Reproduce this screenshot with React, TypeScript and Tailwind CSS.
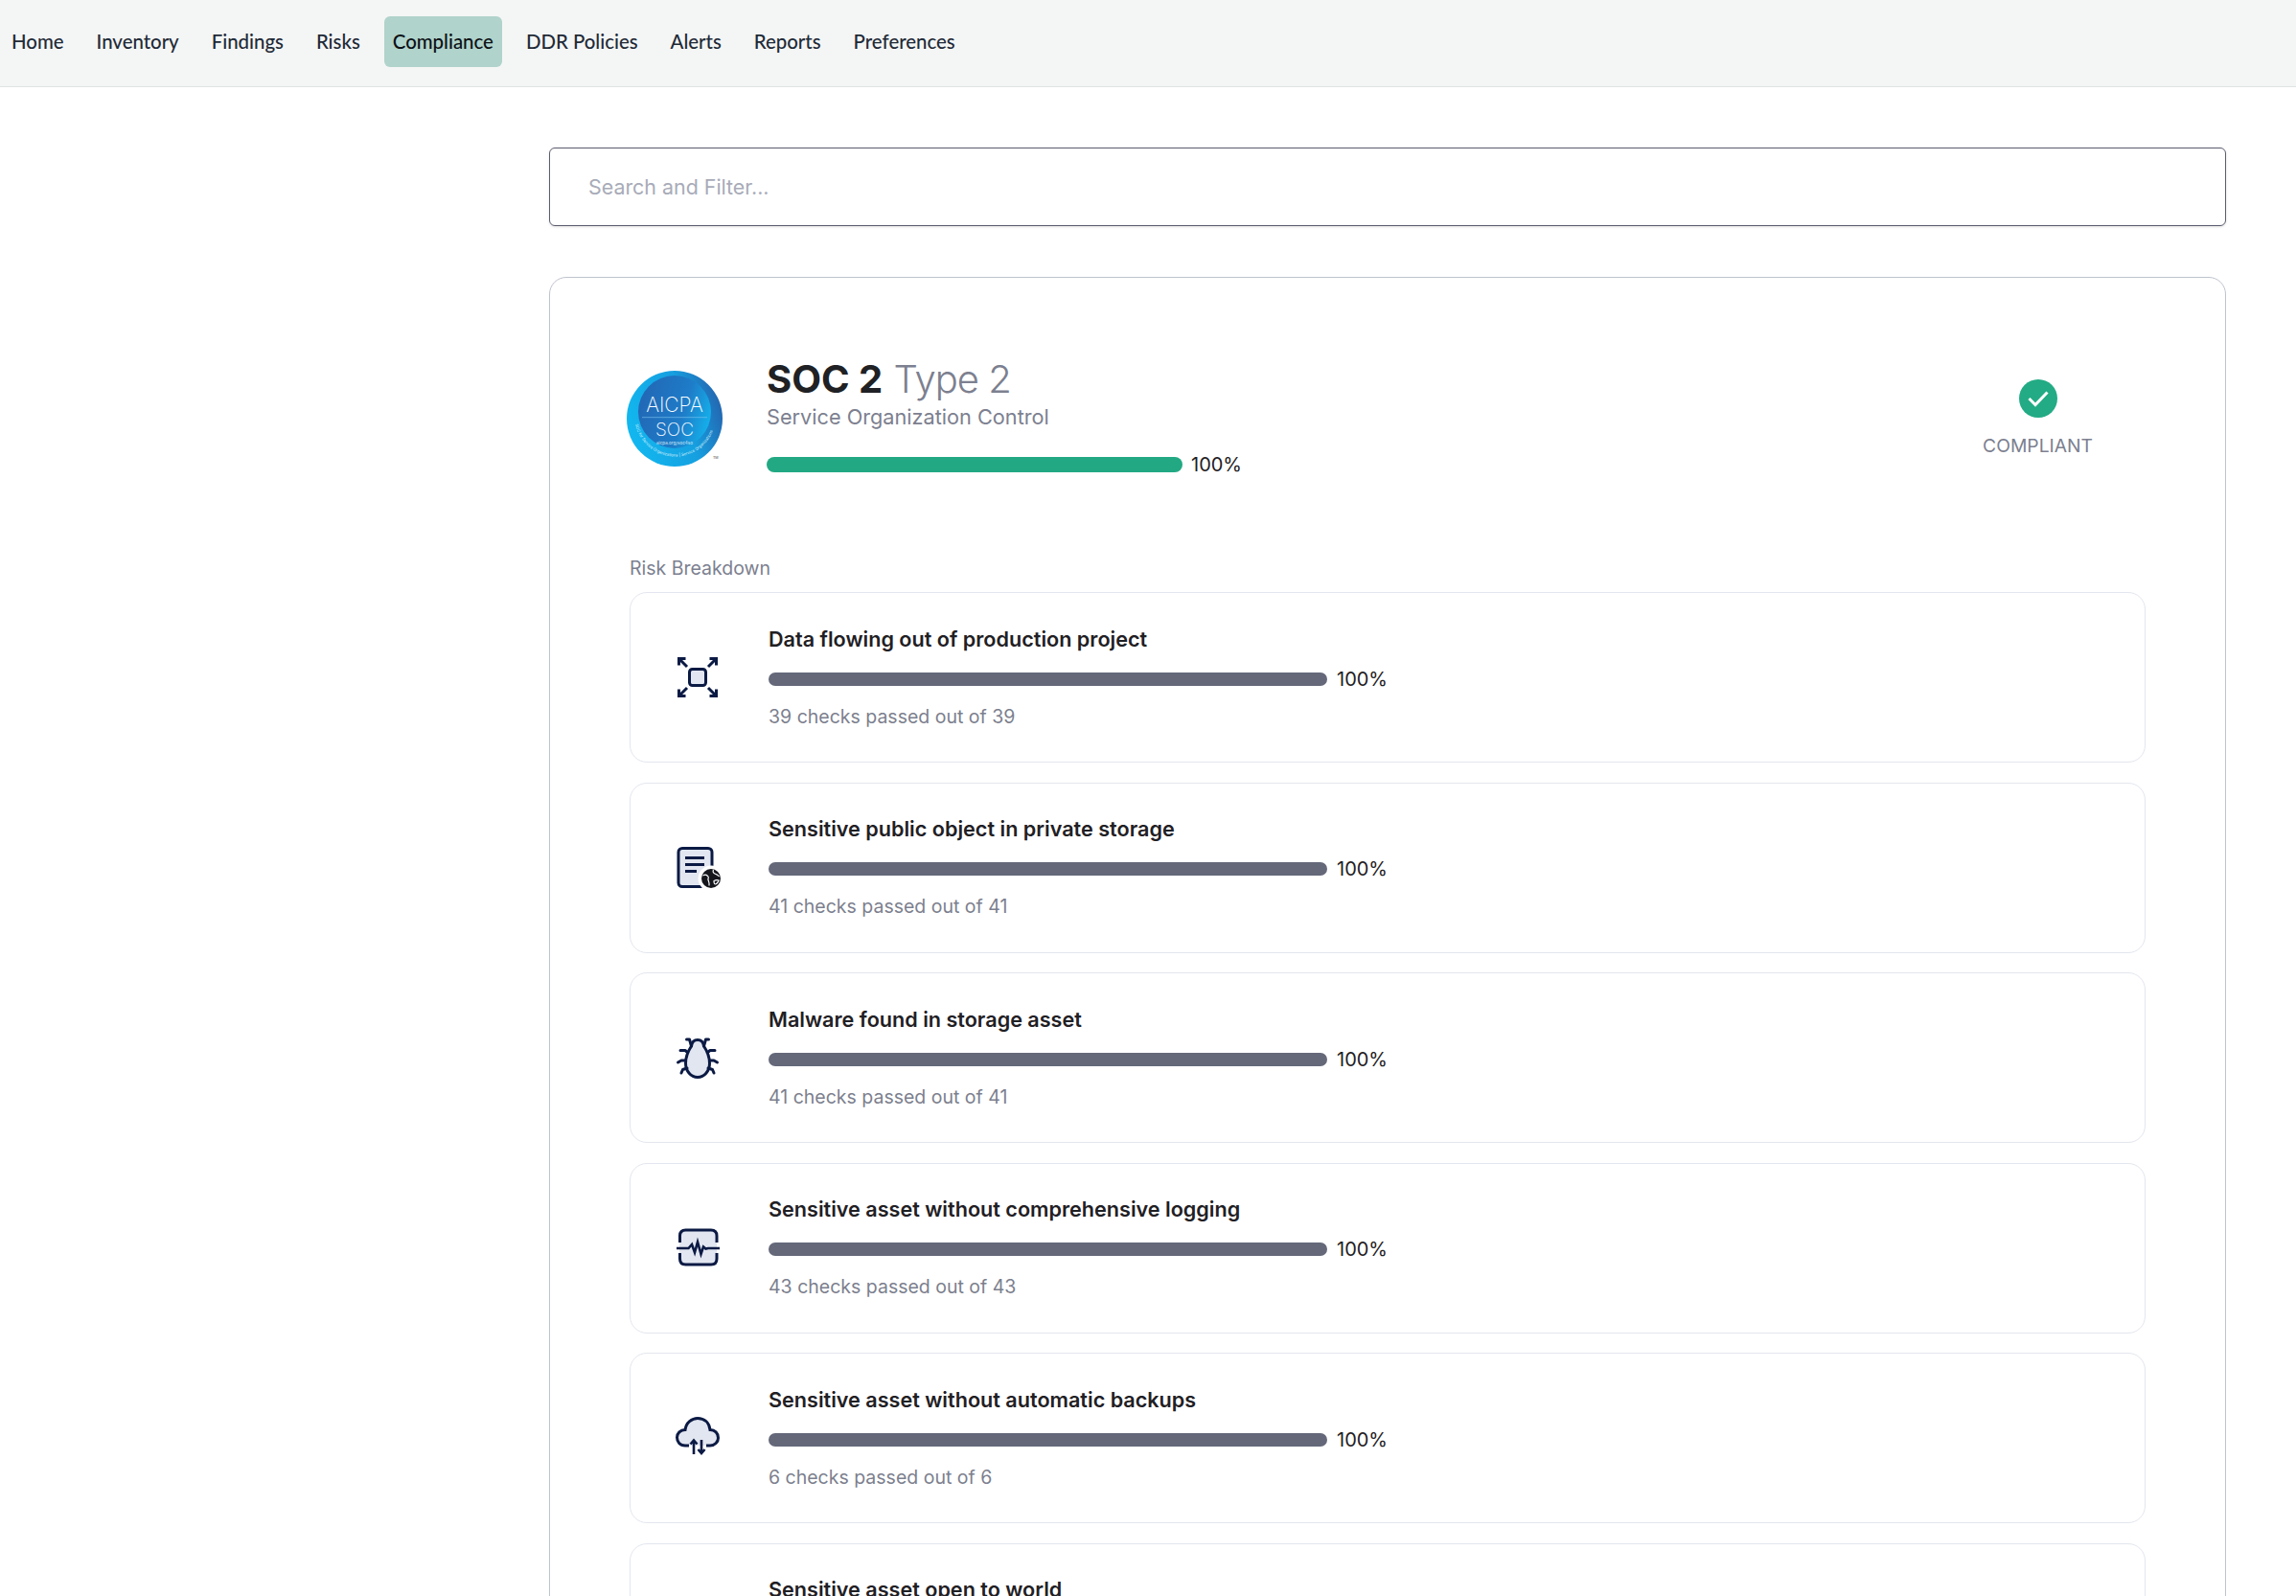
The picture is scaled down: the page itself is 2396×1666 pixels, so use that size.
const navItems = ["Home", "Inventory", "Findings", "Risks", "Compliance", "DDR Policies", "Alerts", "Reports", "Preferences"];

const ink = "#0b1a44";
const tint = "#e2e6f0";

function ExpandIcon() {
    return (
        <svg width="48" height="48" viewBox="0 0 48 48" fill="none" stroke={ink} strokeWidth="3">
            <rect x="15.5" y="15.5" width="17" height="17" rx="3" fill={tint} />
            <path d="M13 13L5 5M4.5 11.5V4.5H11.5M35 13L43 5M36.5 4.5H43.5V11.5M13 35L5 43M4.5 36.5V43.5H11.5M35 35L43 43M43.5 36.5V43.5H36.5" />
        </svg>
    );
}

function DocumentIcon() {
    return (
        <svg width="48" height="48" viewBox="0 0 48 48" fill="none" stroke={ink} strokeWidth="3" className="overflow-visible">
            <rect x="4" y="3.5" width="35" height="40" rx="4" fill={tint} />
            <path d="M11 13.5H31M11 20.5H31M11 27.5H23" />
            <circle cx="38" cy="35" r="13.5" fill="#fff" stroke="none" />
            <circle cx="38" cy="35" r="10" fill="#14161c" stroke="none" />
            <path d="M29.5 32c2.5-1.5 4.5-0.5 5.5 1s-0.5 2 0 3.5 1.5 3 1 6M40.5 26c-1 2 0 3.5 1.5 4s3 1 4.5 3M41 37.5c2-1 3.5-1 5-0.5-0.5 2-2.5 4-3.5 4s-1.5-1.5-1.5-3.5z" stroke="#fff" strokeWidth="1.2" />
        </svg>
    );
}

function BugIcon() {
    return (
        <svg width="48" height="48" viewBox="0 0 48 48" fill="none" stroke={ink} strokeWidth="3" strokeLinecap="round" strokeLinejoin="round">
            <path d="M24 5.5C20 5.5 18 8 17.5 12C13.5 18 11.5 24 11.5 30C11.5 38 17 44.5 24 44.5C31 44.5 36.5 38 36.5 30C36.5 24 34.5 18 30.5 12C30 8 28 5.5 24 5.5Z" fill={tint} />
            <path d="M17.5 12L15.5 5H12.5M30.5 12L32.5 5H35.5M13.5 18.5L11 16.5H6M34.5 18.5L37 16.5H42M11.5 27H7L3.5 29M36.5 27H41L44.5 29M13 35L8.5 36.5L7 40M35 35L39.5 36.5L41 40" />
        </svg>
    );
}

function PulseIcon() {
    return (
        <svg width="48" height="48" viewBox="0 0 48 48" fill="none" stroke={ink} strokeWidth="3">
            <rect x="5" y="5" width="39" height="36" rx="6" fill={tint} stroke="none" />
            <path d="M5.5 18V11Q5.5 5 11.5 5H38Q44 5 44 11V18M5.5 29V35Q5.5 41 11.5 41H38Q44 41 44 35V29" />
            <path d="M2 24H14.5L18 20L21 28.5L24 17.5L27.5 30L30 22.5L32.5 24.5L35 24H47" strokeWidth="2.6" />
        </svg>
    );
}

function CloudIcon() {
    return (
        <svg width="48" height="48" viewBox="0 0 48 48" fill="none" stroke={ink} strokeWidth="3">
            <path d="M11 32C5.5 32 2.5 28 2.5 23.5C2.5 19 6 15.5 11 15.5C12 8 18 3.5 24 3.5C31 3.5 36 8 37 15.5C42 15.5 45.5 19 45.5 24C45.5 28 42 32 37 32Z" fill={tint} stroke="none" />
            <path d="M15 32H11C5.5 32 2.5 28 2.5 23.5C2.5 19 6 15.5 11 15.5C12 8 18 3.5 24 3.5C31 3.5 36 8 37 15.5C42 15.5 45.5 19 45.5 24C45.5 28 42 32 37 32H33" />
            <path d="M20 41V27M16.5 30.5L20 26.5L23.5 30.5M28 26V40M24.5 36L28 40L31.5 36" strokeWidth="2.6" />
        </svg>
    );
}

function WorldStub() {
    return <div className="w-12 h-12" />;
}

const risks = [
    { title: "Data flowing out of production project", passed: 39, Icon: ExpandIcon },
    { title: "Sensitive public object in private storage", passed: 41, Icon: DocumentIcon },
    { title: "Malware found in storage asset", passed: 41, Icon: BugIcon },
    { title: "Sensitive asset without comprehensive logging", passed: 43, Icon: PulseIcon },
    { title: "Sensitive asset without automatic backups", passed: 6, Icon: CloudIcon },
    { title: "Sensitive asset open to world", passed: 12, Icon: WorldStub },
];

function AicpaLogo() {
    return (
        <svg width="100" height="100" viewBox="0 0 100 100" className="overflow-visible shrink-0 -ml-[3px]">
            <defs>
                <linearGradient id="outerRing" x1="0" y1="0.6" x2="1" y2="0.3">
                    <stop offset="0" stopColor="#12b8f0" />
                    <stop offset="0.6" stopColor="#169fe0" />
                    <stop offset="1" stopColor="#2463ae" />
                </linearGradient>
                <linearGradient id="innerDisc" x1="0" y1="0.4" x2="1" y2="0.7">
                    <stop offset="0" stopColor="#2268b6" />
                    <stop offset="0.6" stopColor="#1e7cc8" />
                    <stop offset="1" stopColor="#14b4ee" />
                </linearGradient>
                <path id="ringPath" d="M9 56A41.5 41.5 0 0 0 92 38" />
            </defs>
            <circle cx="50" cy="50" r="50" fill="url(#outerRing)" />
            <circle cx="50" cy="43" r="38" fill="url(#innerDisc)" />
            <text x="50" y="43" textAnchor="middle" fontSize="21" fontWeight="200" fill="#fff" fontFamily="Inter, sans-serif">AICPA</text>
            <rect x="16" y="48.5" width="68" height="0.6" fill="#7fc6ee" />
            <text x="50" y="68" textAnchor="middle" fontSize="19" fontWeight="200" fill="#fff" fontFamily="Inter, sans-serif">SOC</text>
            <text x="50" y="77" textAnchor="middle" fontSize="4.6" fill="#d5ecfa" fontFamily="Inter, sans-serif">aicpa.org/soc4so</text>
            <text fontSize="4.2" fill="#d5f0fc" fontFamily="Inter, sans-serif">
                <textPath href="#ringPath">SOC for Service Organizations | Service Organizations</textPath>
            </text>
            <text x="90" y="92" fontSize="3.6" fill="#444" fontFamily="Inter, sans-serif">TM</text>
        </svg>
    );
}

function RiskRow(props: { title: string; passed: number; Icon: () => React.ReactElement }) {
    const { Icon } = props;
    return (
        <div className="h-[178px] shrink-0 flex items-center pl-[46px] border border-[#e3e6ee] rounded-[18px]">
            <Icon />
            <div className="ml-[50px]">
                <div className="text-[21.6px] leading-[30px] font-semibold text-[#1f2024]">{props.title}</div>
                <div className="mt-[13px] flex items-center">
                    <div className="w-[583px] h-[14px] bg-[#646879] rounded-full" />
                    <span className="ml-[10px] text-[20px] leading-[28px] text-[#1f2024]">100%</span>
                </div>
                <div className="mt-[10px] text-[19.5px] leading-[30px] text-[#7c7f8e]">{props.passed} checks passed out of {props.passed}</div>
            </div>
        </div>
    );
}

export default function App() {
    return (
        <div className="h-[1666px] overflow-hidden bg-white font-['Inter',sans-serif]">
            <nav className="h-[91px] bg-[#f4f6f5] border-b border-[#dfe3e1] flex items-center gap-[16px] pl-[3px] pb-[4px] font-['Lato',sans-serif] text-[20.4px] font-medium text-[#1f2a37]">
                {navItems.map((item) => (
                    <a
                        key={item}
                        className={item === "Compliance"
                            ? "h-[53px] flex items-center px-[9px] rounded-[6px] bg-[#b0d3cb] text-[#0c1116]"
                            : "h-[53px] flex items-center px-[9px]"}
                    >
                        {item}
                    </a>
                ))}
            </nav>

            <main className="ml-[573px] w-[1750px] pt-[63px]">
                <input
                    className="w-full h-[82px] px-[40px] border border-[#5c5c70] rounded-[6px] shadow-sm text-[21.4px] outline-none placeholder:text-[#a8abb8]"
                    placeholder="Search and Filter..."
                />

                <section className="mt-[53px] border border-[#bfc3cd] rounded-[18px] px-[83px] pt-[97px]">
                    <div className="flex items-start justify-between">
                        <div className="flex items-start">
                            <AicpaLogo />
                            <div className="ml-[46px] -mt-[15px]">
                                <h1 className="text-[40px] leading-[48px] text-[#7c808f]">
                                    <span className="font-bold text-[#202124]">SOC 2</span> <span className="font-light tracking-[-1px]">Type 2</span>
                                </h1>
                                <p className="text-[21.7px] leading-[30px] text-[#7c808f]">Service Organization Control</p>
                                <div className="mt-[21px] flex items-center">
                                    <div className="w-[434px] h-[16px] bg-[#22a984] rounded-full" />
                                    <span className="ml-[9px] text-[20px] leading-[28px] text-[#1f2024]">100%</span>
                                </div>
                            </div>
                        </div>
                        <div className="flex flex-col items-center pr-[55px] mt-[9px]">
                            <div className="w-[40px] h-[40px] rounded-full bg-[#22ab84] flex items-center justify-center">
                                <svg width="22" height="18" viewBox="0 0 22 18" fill="none" stroke="#fff" strokeWidth="3">
                                    <path d="M1.5 9L8 15.5L20.5 2.5" />
                                </svg>
                            </div>
                            <span className="mt-[15px] text-[19.3px] leading-[28px] text-[#7c808f]">COMPLIANT</span>
                        </div>
                    </div>

                    <h2 className="mt-[80px] text-[19.5px] leading-[28px] text-[#7c808f]">Risk Breakdown</h2>
                    <div className="mt-[11px] flex flex-col gap-[20.6px]">
                        {risks.map((risk) => (
                            <RiskRow key={risk.title} {...risk} />
                        ))}
                    </div>
                </section>
            </main>
        </div>
    );
}
